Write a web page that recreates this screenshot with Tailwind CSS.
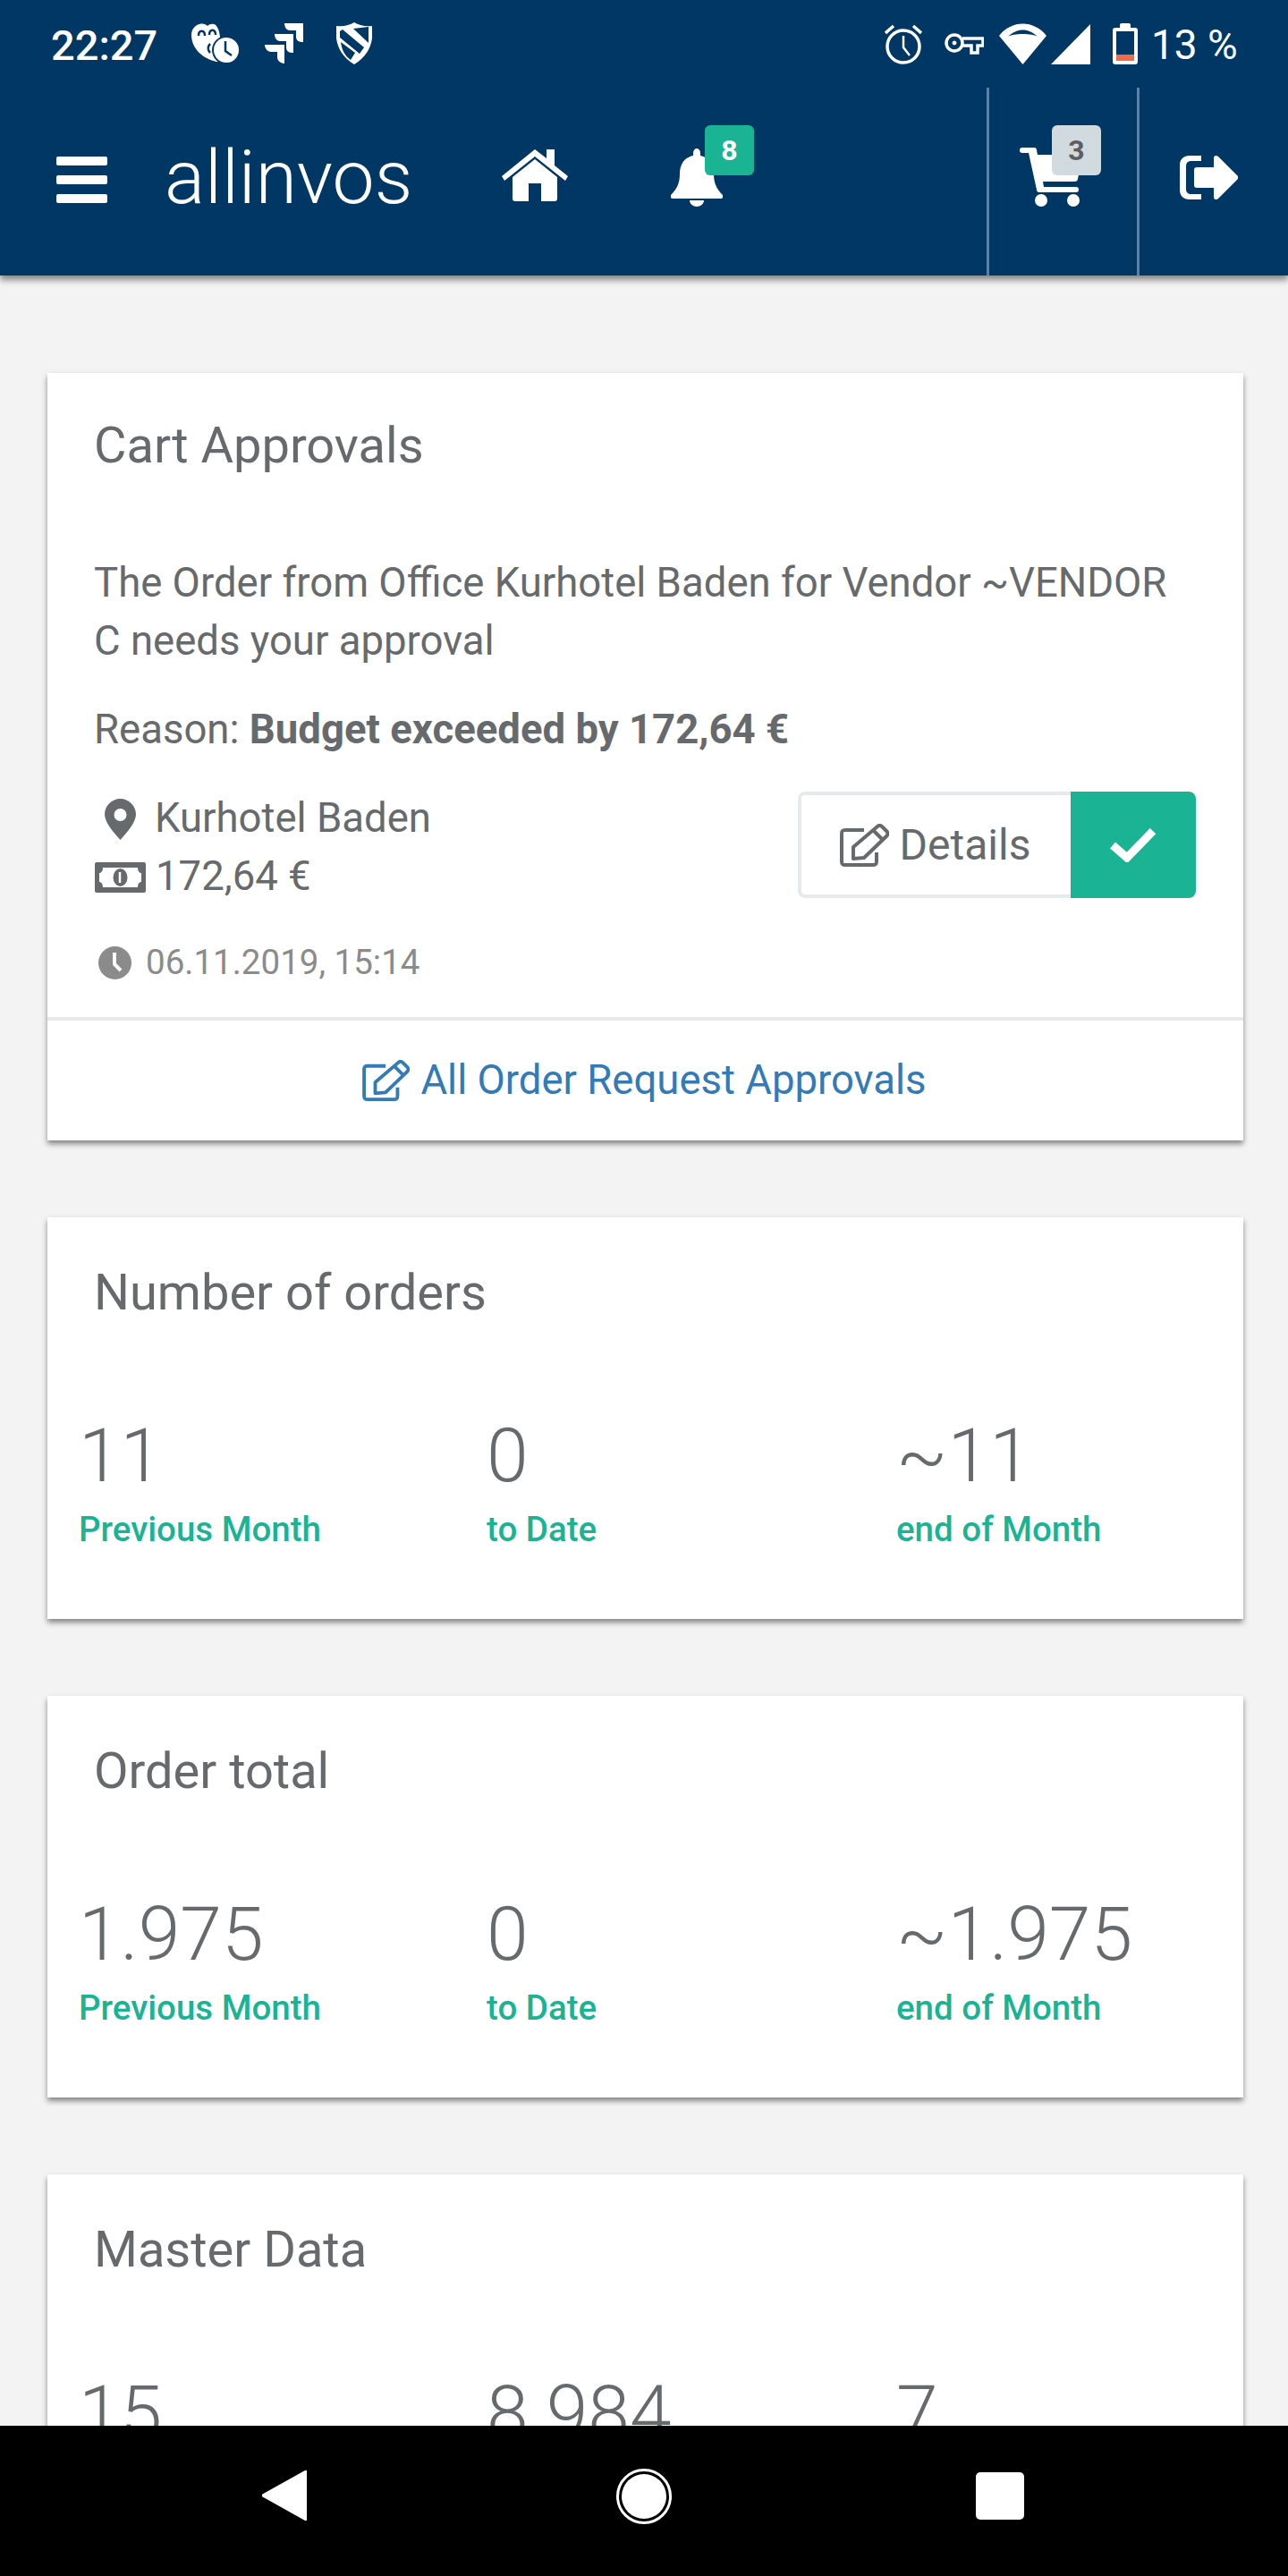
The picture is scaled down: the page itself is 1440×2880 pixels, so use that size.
<!DOCTYPE html>
<html lang="en">
<head>
    <meta charset="UTF-8">
    <title>allinvos</title>
    <script src="https://cdn.jsdelivr.net/npm/@tailwindcss/browser@4"></script>
</head>
<body class="bg-[#f3f3f4] font-['Roboto',sans-serif] text-[#676a6c]">
<div class="relative w-[1440px] h-[2880px] overflow-hidden">

    <!-- app header incl. android status bar -->
    <header class="bg-[#003764] h-[308px] shadow-[0_5px_7px_rgba(0,0,0,0.45)] text-white relative">
        <div class="h-[98px] flex items-center pl-[57px] pr-[57px]">
            <span class="text-[47px] font-medium w-[157px] leading-none pt-[2px]">22:27</span>
            <div class="flex items-center -mt-[2px]">
                <svg class="w-[54px] h-[46px]" viewBox="0 0 54 46"><path fill="#fff" d="M9 2c4-1 7 0 9 2 3-3 8-3 10 0 3 4 4 10 4 14v26h-4C14 41 0 30 0 14 0 8 4 3 9 2z"/><path d="M8 15c0-7 7-7 7 0M20 14c0-7 7-7 7 0M21 24c-3 3-3 7 0 10" fill="none" stroke="#003764" stroke-width="2.5"/><circle cx="39" cy="31" r="16" fill="#003764"/><circle cx="39" cy="31" r="14" fill="#fff"/><path d="M38 21v11l7 5" fill="none" stroke="#003764" stroke-width="2.5"/></svg>
                <svg class="w-[44px] h-[46px] ml-[28px]" viewBox="0 0 44 46" fill="#fff"><path d="M22 1h21v21c0 0-8 1-8-6v-7h-7c-4 0-6-4-6-8zM11 13h21v21c0 0-8 1-8-6v-7h-7c-4 0-6-4-6-8zM0 25h22v21c-4 0-8-3-8-7v-6H7c-4 0-7-4-7-8z"/></svg>
                <svg class="w-[40px] h-[47px] ml-[36px]" viewBox="0 0 40 47"><path fill="#fff" d="M0 4c8 1 15-1 20-4 5 3 12 5 20 4 2 16-2 32-20 43C2 36-2 20 0 4z"/><path fill="#003764" d="M19 7l17-2v18zM4 10l3-2 24 20-5 7-22-18zM5 22l16 12-5 8C9 37 6 30 5 22z"/></svg>
            </div>
            <div class="ml-auto flex items-center">
                <svg class="w-[42px] h-[46px]" viewBox="0 0 42 46" fill="none" stroke="#fff" stroke-width="3.5"><circle cx="21" cy="26" r="18"/><path d="M21 14v13l7 9" stroke-width="2.5"/><path d="M1 11l9-8M41 11l-9-8"/></svg>
                <svg class="w-[44px] h-[26px] ml-[25px]" viewBox="0 0 44 26" fill="none" stroke="#fff" stroke-width="3.5"><circle cx="11" cy="12" r="9"/><circle cx="11" cy="12" r="2" fill="#fff" stroke-width="1"/><path d="M20 7h23v8h-6v8h-7v-8H20"/></svg>
                <svg class="w-[53px] h-[46px] ml-[17px]" viewBox="0 0 53 46" fill="#fff"><path d="M26.500 46L0 14C14-4 39-4 53 14zM26.500 36L43 15C33 5 20 5 10 15l0 0c5-4 28-4 33 0z"/></svg>
                <svg class="w-[44px] h-[45px] ml-[5px]" viewBox="0 0 44 45" fill="#fff"><path d="M44 0v45H0z"/></svg>
                <div class="ml-[25px] w-[28px] h-[46px] relative">
                    <div class="absolute top-0 left-[8px] w-[12px] h-[5px] bg-white rounded-t-[2px]"></div>
                    <div class="absolute top-[5px] left-0 right-0 bottom-0 border-[4px] border-white rounded-[3px]"><div class="absolute bottom-0 left-0 right-0 h-[7px] bg-[#ef6c4a]"></div></div>
                </div>
                <span class="text-[46px] w-[96px] ml-[15px] leading-none whitespace-nowrap pt-[2px]">13 %</span>
            </div>
        </div>

        <nav class="h-[210px] flex">
            <div class="w-[1103px] flex items-center relative">
                <div class="ml-[63px] w-[57px] flex flex-col gap-[11px] -mt-[4px]">
                    <div class="h-[10px] rounded-[2px] bg-white"></div>
                    <div class="h-[10px] rounded-[2px] bg-white"></div>
                    <div class="h-[10px] rounded-[2px] bg-white"></div>
                </div>
                <span class="ml-[64px] text-[84px] font-light leading-none -mt-[8px]">allinvos</span>
                <svg class="absolute left-[561px] top-[69px] w-[74px] h-[58px]" viewBox="0 0 74 58" fill="#fff"><path d="M37 11L12 31v24c0 2 1 3 3 3h15V38h14v20h15c2 0 3-1 3-3V31z"/><path d="M37 0L50 10V0h9v18l15 12-3 5L37 8 3 35l-3-5z"/></svg>
                <svg class="absolute left-[750px] top-[68px] w-[58px] h-[65px]" viewBox="0 0 58 65" fill="#fff"><path d="M29 0c2 0 4 2 4 5v3c10 2 15 10 15 20 0 11 3 17 10 24 1 2 0 4-2 4H2c-2 0-3-2-2-4 7-7 10-13 10-24 0-10 5-18 15-20V5c0-3 2-5 4-5z"/><path d="M21 58h16c0 4-4 7-8 7s-8-3-8-7z"/></svg>
                <div class="absolute left-[788px] top-[42px] w-[55px] h-[56px] rounded-[6px] bg-[#1ab394] flex items-center justify-center text-[32px] font-bold leading-none">8</div>
            </div>
            <div class="w-[171px] border-l-[3px] border-r-[3px] border-[#5f80a0] relative">
                <svg class="absolute left-[34px] top-[67px] w-[70px] h-[66px]" viewBox="0 0 70 66" fill="#fff"><path d="M3 0h13c2 0 3 1 3 3l1 5h48c2 0 2 2 2 3l-5 24c0 2-2 3-3 3H26l1 6h36c2 0 3 1 3 3s-1 3-3 3H22c-2 0-3-1-3-3L10 6H3C1 6 0 5 0 3s1-3 3-3z"/><circle cx="24" cy="59" r="7"/><circle cx="60" cy="59" r="7"/></svg>
                <div class="absolute left-[70px] top-[42px] w-[55px] h-[56px] rounded-[6px] bg-[#d1dade] text-[#5e5e5e] flex items-center justify-center text-[32px] font-bold leading-none">3</div>
            </div>
            <div class="flex-1 relative">
                <svg class="absolute left-[45px] top-[76px] w-[65px] h-[49px]" viewBox="0 0 65 49" fill="#fff"><path d="M24 0v6H13C9 6 7 8 7 12v25c0 4 2 6 6 6h11v6H11C4 49 0 45 0 38V11C0 4 4 0 11 0z"/><path d="M40 0c1 0 2 0 3 1l21 21c2 2 2 3 0 5L43 48c-1 1-2 1-3 1s-2-1-2-3V36H19c-2 0-3-1-3-3V16c0-2 1-3 3-3h19V3c0-2 1-3 2-3z"/></svg>
            </div>
        </nav>
    </header>

    <main class="px-[53px] pt-[109px] flex flex-col gap-[86px] w-[1443px]">
        <!-- cart approvals -->
        <section class="w-[1337px] bg-white h-[858px] shadow-[0_4px_6px_rgba(0,0,0,0.45)] flex flex-col">
            <h2 class="ml-[52px] mt-[49px] text-[56px] leading-[65px]">Cart Approvals</h2>
            <p class="ml-[52px] mt-[88px] w-[1240px] text-[45.5px] leading-[65px]">The Order from Office Kurhotel Baden for Vendor ~VENDOR C needs your approval</p>
            <p class="ml-[52px] mt-[34px] text-[45.5px] leading-[65px]">Reason: <b class="font-bold">Budget exceeded by 172,64 €</b></p>
            <div class="flex justify-between mt-[35px] pr-[53px]">
                <div class="ml-[53px]">
                    <div class="flex items-center h-[65px] text-[45.5px]">
                        <svg class="ml-[11px] w-[35px] h-[46px]" viewBox="0 0 35 46" fill="#676a6c"><path fill-rule="evenodd" d="M17.500 0C27 0 35 8 35 17.500 35 26 25 38 17.500 46 10 38 0 26 0 17.500 0 8 8 0 17.500 0zm0 11a7 7 0 1 0 0 14 7 7 0 0 0 0-14z"/></svg>
                        <span class="ml-[21px]">Kurhotel Baden</span>
                    </div>
                    <div class="flex items-center h-[65px] text-[45.5px]">
                        <svg class="w-[57px] h-[34px]" viewBox="0 0 57 34"><rect width="57" height="34" rx="2" fill="#676a6c"/><path d="M9 6h39c0 4 2 6 4 6v10c-2 0-4 2-4 6H9c0-4-2-6-4-6V12c2 0 4-2 4-6z" fill="#fff"/><ellipse cx="28.500" cy="17" rx="8" ry="10" fill="#676a6c"/><path d="M28 11v12" stroke="#fff" stroke-width="2.500"/></svg>
                        <span class="ml-[11px]">172,64 €</span>
                    </div>
                </div>
                <div class="flex h-[119px] mt-[2px] text-[48px]">
                    <div class="w-[305px] border-[4px] border-r-0 border-[#e7eaec] rounded-l-[8px] flex items-center justify-center gap-[12px]">
                        <svg class="w-[55px] h-[48px] -ml-[2px]" viewBox="0 0 55 48" fill="none" stroke="#676a6c" stroke-width="4"><path d="M27 7H6C3 7 2 8 2 11v31c0 3 1 4 4 4h31c3 0 4-1 4-4V32"/><path d="M15 26L42 3c2-2 4-1 6 1l4 4c2 2 2 4 0 6L27 38l-12 1z" stroke-linejoin="round"/><path d="M38 8l9 9"/></svg>
                        <span>Details</span>
                    </div>
                    <div class="w-[140px] bg-[#1ab394] rounded-r-[8px] flex items-center justify-center">
                        <svg class="w-[52px] h-[38px]" viewBox="0 0 52 38" fill="none" stroke="#fff" stroke-width="9"><path d="M3 19l16 14L48 3"/></svg>
                    </div>
                </div>
            </div>
            <div class="ml-[57px] mt-[38px] flex items-center text-[38.5px] text-[#8b8b8b] h-[50px]">
                <svg class="w-[37px] h-[37px]" viewBox="0 0 37 37"><circle cx="18.500" cy="18.500" r="18.500" fill="#8b8b8b"/><path d="M18 7v13l7 7" fill="none" stroke="#fff" stroke-width="4"/></svg>
                <span class="ml-[16px]">06.11.2019, 15:14</span>
            </div>
            <div class="mt-[36px] h-[4px] bg-[#e7eaec]"></div>
            <a class="flex-1 flex items-center justify-center gap-[12px] text-[45.5px] text-[#337ab7] -ml-[2px]">
                <svg class="w-[53px] h-[46px]" viewBox="0 0 55 48" fill="none" stroke="#337ab7" stroke-width="4"><path d="M27 7H6C3 7 2 8 2 11v31c0 3 1 4 4 4h31c3 0 4-1 4-4V32"/><path d="M15 26L42 3c2-2 4-1 6 1l4 4c2 2 2 4 0 6L27 38l-12 1z" stroke-linejoin="round"/><path d="M38 8l9 9"/></svg>
                All Order Request Approvals
            </a>
        </section>

        <!-- number of orders -->
        <section class="w-[1337px] bg-white h-[449px] shadow-[0_4px_6px_rgba(0,0,0,0.45)]">
            <h2 class="ml-[52px] pt-[52px] text-[56px] leading-[65px]">Number of orders</h2>
            <div class="grid grid-cols-[456px_458px_1fr] ml-[35px] mt-[100px]">
                <div><div class="text-[84px] font-light leading-[100px]">11</div><div class="mt-[9px] text-[38.5px] font-medium text-[#1ab394] leading-[46px]">Previous Month</div></div>
                <div><div class="text-[84px] font-light leading-[100px]">0</div><div class="mt-[9px] text-[38.5px] font-medium text-[#1ab394] leading-[46px]">to Date</div></div>
                <div><div class="text-[84px] font-light leading-[100px]">~11</div><div class="mt-[9px] text-[38.5px] font-medium text-[#1ab394] leading-[46px]">end of Month</div></div>
            </div>
        </section>

        <!-- order total -->
        <section class="w-[1337px] bg-white h-[449px] shadow-[0_4px_6px_rgba(0,0,0,0.45)]">
            <h2 class="ml-[52px] pt-[52px] text-[56px] leading-[65px]">Order total</h2>
            <div class="grid grid-cols-[456px_458px_1fr] ml-[35px] mt-[100px]">
                <div><div class="text-[84px] font-light leading-[100px]">1.975</div><div class="mt-[9px] text-[38.5px] font-medium text-[#1ab394] leading-[46px]">Previous Month</div></div>
                <div><div class="text-[84px] font-light leading-[100px]">0</div><div class="mt-[9px] text-[38.5px] font-medium text-[#1ab394] leading-[46px]">to Date</div></div>
                <div><div class="text-[84px] font-light leading-[100px]">~1.975</div><div class="mt-[9px] text-[38.5px] font-medium text-[#1ab394] leading-[46px]">end of Month</div></div>
            </div>
        </section>

        <!-- master data -->
        <section class="w-[1337px] bg-white h-[449px] shadow-[0_4px_6px_rgba(0,0,0,0.45)]">
            <h2 class="ml-[52px] pt-[52px] text-[56px] leading-[65px]">Master Data</h2>
            <div class="grid grid-cols-[456px_458px_1fr] ml-[35px] mt-[100px]">
                <div><div class="text-[84px] font-light leading-[100px]">15</div></div>
                <div><div class="text-[84px] font-light leading-[100px]">8.984</div></div>
                <div><div class="text-[84px] font-light leading-[100px]">7</div></div>
            </div>
        </section>
    </main>

    <!-- android nav bar -->
    <div class="absolute left-0 right-0 bottom-0 h-[168px] bg-black">
        <svg class="absolute left-[293px] top-[50px] w-[50px] h-[56px]" viewBox="0 0 50 56" fill="#fff"><path d="M50 0v56L0 28z" stroke="#fff" stroke-width="2" stroke-linejoin="round"/></svg>
        <div class="absolute left-[689px] top-[48px] w-[62px] h-[62px] rounded-full border-[3px] border-white p-[3px]"><div class="w-full h-full rounded-full bg-white"></div></div>
        <div class="absolute left-[1091px] top-[52px] w-[54px] h-[53px] rounded-[5px] bg-white"></div>
    </div>
</div>
</body>
</html>
